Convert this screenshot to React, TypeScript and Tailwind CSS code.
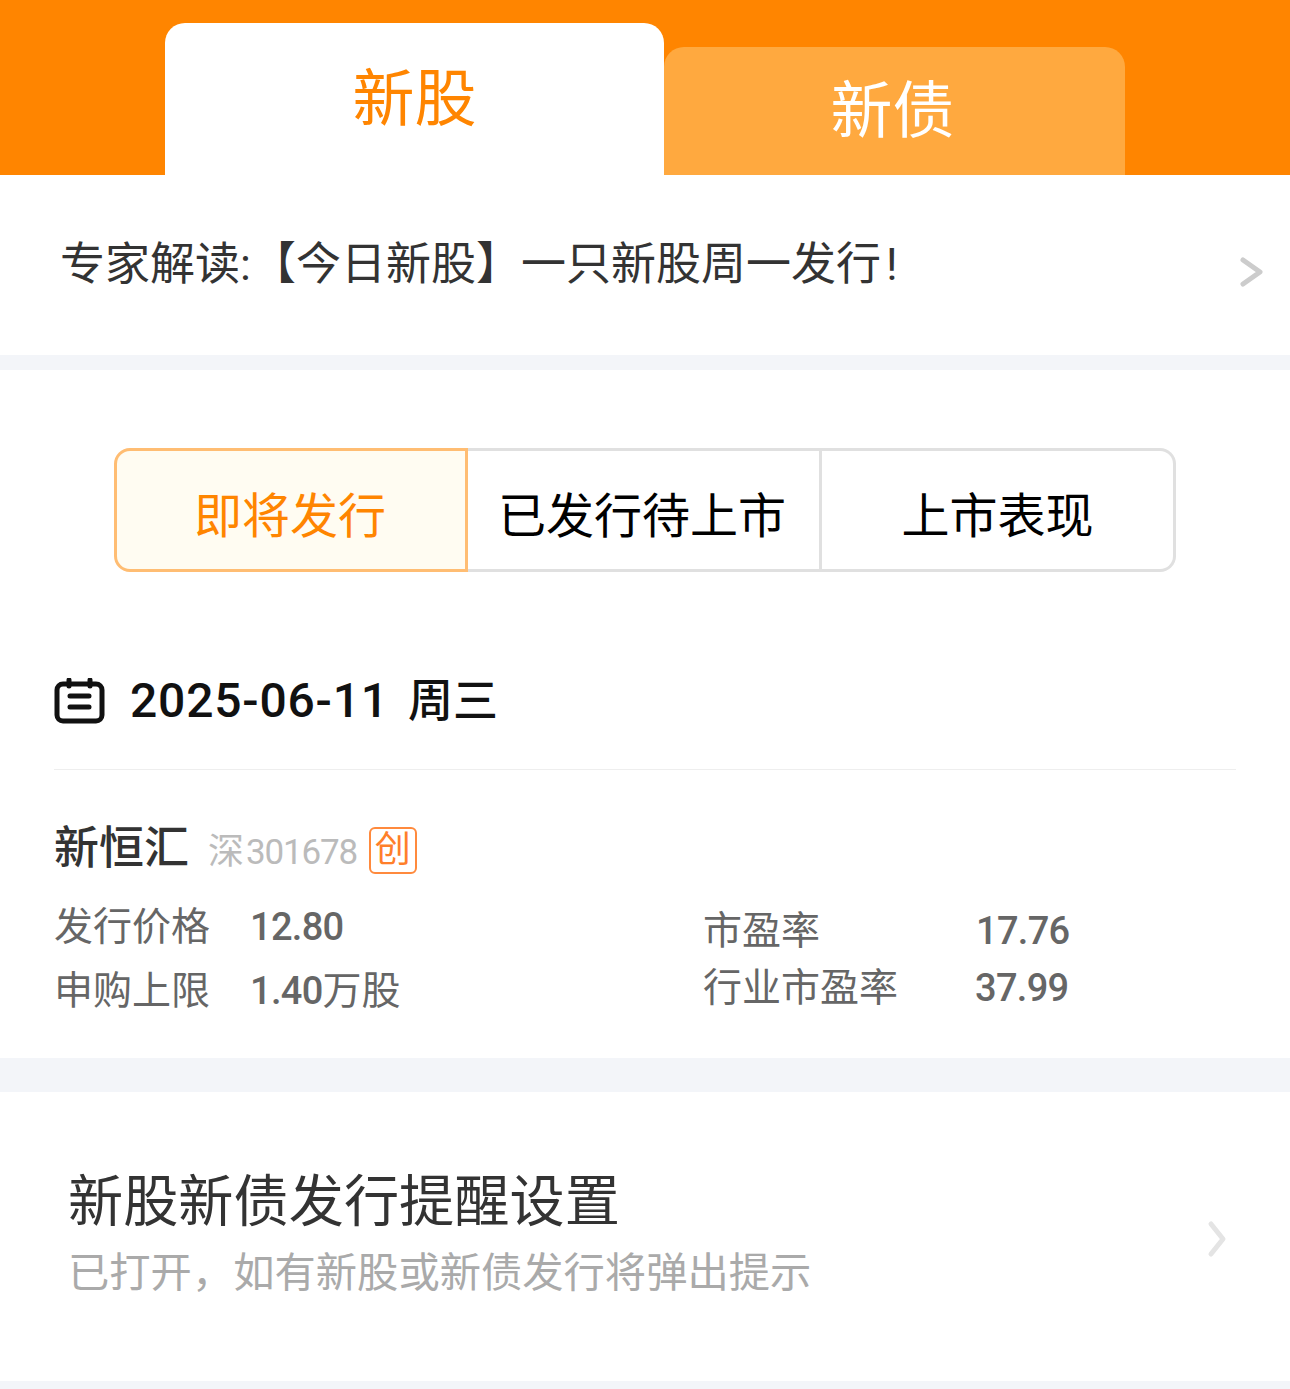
const cjk = "font-['Roboto','Noto_Sans_CJK_SC',sans-serif]";

function Calendar() {
  return (
    <svg width="51" height="46" viewBox="0 0 51 46" fill="none" stroke="#111" strokeWidth="5" strokeLinecap="round">
      <rect x="3" y="6" width="45" height="37" rx="6" />
      <path d="M15 2v6M36 2v6" />
      <path d="M16 18h19M16 29h19" />
    </svg>
  );
}

function Chevron({ color, w, h, sw }: { color: string; w: number; h: number; sw: number }) {
  return (
    <svg width={w} height={h} viewBox={`0 0 ${w} ${h}`} fill="none" stroke={color} strokeWidth={sw} strokeLinecap="round" strokeLinejoin="round">
      <path d={`M${sw} ${sw}L${w - sw} ${h / 2}L${sw} ${h - sw}`} />
    </svg>
  );
}

export default function App() {
  return (
    <div className={`w-[1290px] h-[1389px] overflow-hidden bg-white ${cjk}`}>
      {/* Tabs */}
      <div className="h-[175px] bg-[#ff8500] pl-[165px] flex items-end">
        <div className="w-[499px] h-[152px] bg-white rounded-t-[20px] flex justify-center pt-[33px] text-[62px] leading-[88px] text-[#ff8500]">
          新股
        </div>
        <div className="w-[461px] h-[128px] bg-[#ffa93f] rounded-t-[20px] flex justify-center pt-[21px] pr-[4px] text-[62px] leading-[88px] text-white">
          新债
        </div>
      </div>

      {/* Notice */}
      <div className="h-[180px] flex items-center justify-between pl-[60px] pr-[25px]">
        <span className="text-[45px] leading-[64px] text-[#333]">
          专家解读:【今日新股】一只新股周一发行<span className="ml-[5px]">!</span>
        </span>
        <div className="mt-[14px]">
          <Chevron color="#ccc" w={27} h={34} sw={5} />
        </div>
      </div>
      <div className="h-[15px] bg-[#f3f5f9]" />

      {/* Segments */}
      <div className="pt-[78px] px-[114px]">
        <div className="flex h-[124px] text-[48px] rounded-[16px]">
          <div className="w-[354px] flex items-center justify-center pt-[13px] pr-[2px] bg-[#fffcf2] border-[3px] border-[#ffbd73] rounded-l-[16px] text-[#ff8500]">
            即将发行
          </div>
          <div className="w-[354px] flex items-center justify-center pt-[14px] pr-[3px] border-y-[3px] border-r-[3px] border-[#e0e0e0] text-black">
            已发行待上市
          </div>
          <div className="flex-1 flex items-center justify-center pt-[14px] border-y-[3px] border-r-[3px] border-[#e0e0e0] rounded-r-[16px] text-black">
            上市表现
          </div>
        </div>
      </div>

      {/* Date */}
      <div className="mx-[54px] mt-[106px] flex items-center gap-[25px] h-[46px] w-[1182px]">
        <Calendar />
        <span className="text-[48px] leading-[60px] font-medium text-[#111] tracking-[0.8px]">
          2025-06-11<span className="ml-[19px] text-[45px] tracking-normal">周三</span>
        </span>
      </div>
      <div className="mx-[54px] mt-[45px] h-[1px] bg-[#eeeeee]" />

      {/* Stock */}
      <div className="h-[288px]">
        <div className="pl-[54px] pt-[53px] flex items-center h-[105px]">
          <span className="text-[45px] leading-[52px] font-medium text-[#333]">新恒汇</span>
          <span className="ml-[19px] pt-[6px] text-[36px] leading-[52px] text-[#bbb]">
            深<span className="ml-[2px] text-[35px] tracking-[-1.2px]">301678</span>
          </span>
          <span className="ml-[12px] mt-[2px] w-[48px] h-[47px] flex items-center justify-center border-2 border-[#ff8a3d] rounded-[6px] text-[36px] text-[#ff7f2a]">
            创
          </span>
        </div>
        <div className="flex text-[#666] text-[39px] leading-[48px] pl-[54px]">
          <div className="w-[648px] pt-[20px]">
            <div className="flex h-[64px] items-center">
              <span className="w-[196px]">发行价格</span>
              <span className="font-medium text-[38px] tracking-[-0.7px]">12.80</span>
            </div>
            <div className="flex h-[64px] items-center">
              <span className="w-[196px]">申购上限</span>
              <span>
                <span className="font-medium text-[38px] tracking-[-0.7px]">1.40</span>万股
              </span>
            </div>
          </div>
          <div className="pt-[27px] pl-[1px]">
            <div className="flex h-[57px] items-center">
              <span className="w-[273px]">市盈率</span>
              <span className="font-medium text-[38px] tracking-[-0.7px]">17.76</span>
            </div>
            <div className="flex h-[57px] items-center">
              <span className="w-[272px]">行业市盈率</span>
              <span className="font-medium text-[38px] tracking-[-0.7px]">37.99</span>
            </div>
          </div>
        </div>
      </div>
      <div className="h-[34px] bg-[#f3f5f9]" />

      {/* Reminder setting */}
      <div className="h-[289px] flex items-center justify-between pl-[68px] pr-[62px]">
        <div className="flex flex-col pt-[1px]">
          <span className="text-[55.2px] leading-[72px] text-[#333]">新股新债发行提醒设置</span>
          <span className="text-[41.3px] leading-[70px] text-[#aaa]">已打开，如有新股或新债发行将弹出提示</span>
        </div>
        <div className="mt-[4px]">
          <Chevron color="#e4e4e4" w={22} h={40} sw={5} />
        </div>
      </div>
      <div className="h-[8px] bg-[#f3f5f9]" />
    </div>
  );
}
